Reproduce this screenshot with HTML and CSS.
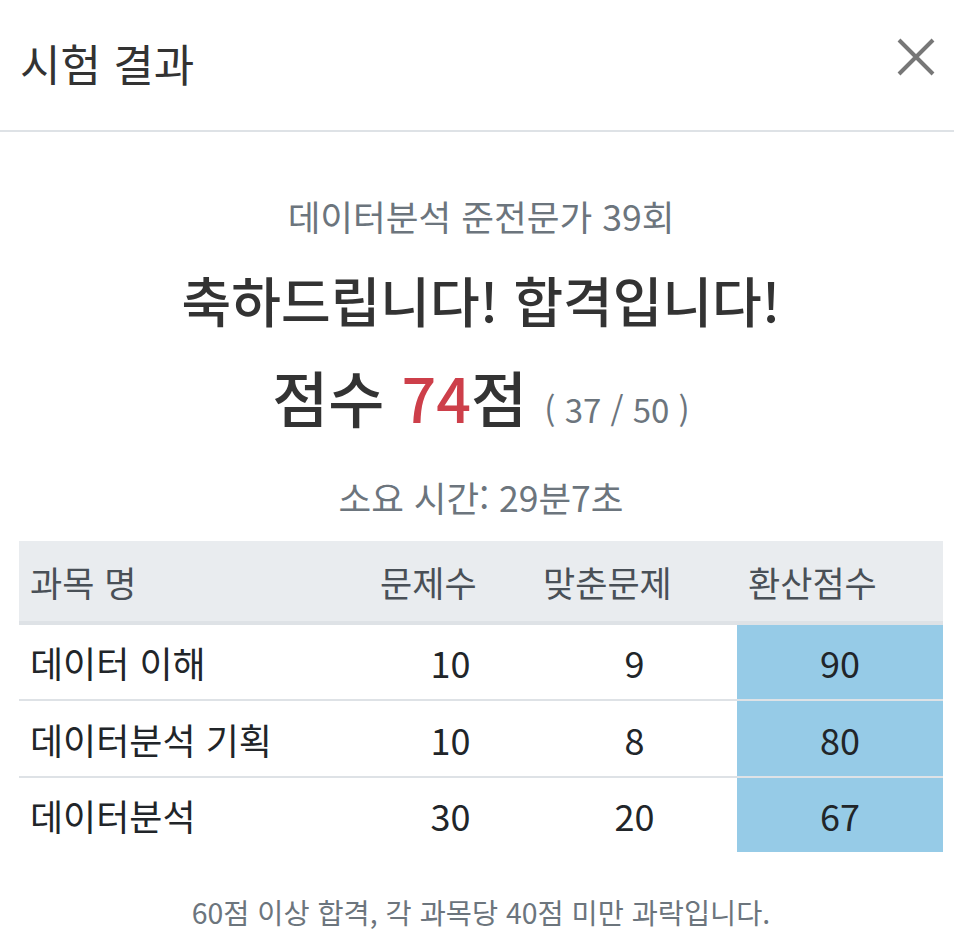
FILE: index.html
```html
<!DOCTYPE html>
<html lang="ko">

<head>
    <meta charset="UTF-8">
    <link rel="stylesheet" href="styles.css">
    <title>시험 결과</title>
</head>

<body>
    <section class="modal">
        <div class="modal-header">
            <h1 class="modal-title">시험 결과</h1>
            <div class="close">
                <svg width="38" height="38" viewBox="0 0 38 38">
                    <path d="M2 2 L36 36 M36 2 L2 36" stroke="#777" stroke-width="4" fill="none" />
                </svg>
            </div>
        </div>
        <div class="modal-body">
            <p class="exam-name">데이터분석 준전문가 39회</p>
            <p class="congrats">축하드립니다! 합격입니다!</p>
            <p class="score">점수 <span class="point">74</span>점 <span class="count">( 37 / 50 )</span></p>
            <p class="time">소요 시간: 29분7초</p>

            <table class="result">
                <thead>
                    <tr>
                        <th class="col-name">과목 명</th>
                        <th class="col-total">문제수</th>
                        <th class="col-right">맞춘문제</th>
                        <th class="col-score">환산점수</th>
                    </tr>
                </thead>
                <tbody>
                    <tr>
                        <td>데이터 이해</td>
                        <td class="num">10</td>
                        <td class="num">9</td>
                        <td class="num conv">90</td>
                    </tr>
                    <tr>
                        <td>데이터분석 기획</td>
                        <td class="num">10</td>
                        <td class="num">8</td>
                        <td class="num conv">80</td>
                    </tr>
                    <tr>
                        <td>데이터분석</td>
                        <td class="num">30</td>
                        <td class="num">20</td>
                        <td class="num conv">67</td>
                    </tr>
                </tbody>
            </table>

            <p class="notice">60점 이상 합격, 각 과목당 40점 미만 과락입니다.</p>
        </div>
    </section>
</body>

</html>
```

FILE: styles.css
```css
* {
    font-family: 'Noto Sans CJK KR', 'Noto Sans', sans-serif;
    box-sizing: border-box;
}

body {
    margin: 0;
    background-color: white;
    color: #212529;
}

.modal-header {
    display: flex;
    justify-content: space-between;
    align-items: center;
    height: 132px;
    padding: 0 19px 0 20px;
    border-bottom: 2px solid #dee2e6;
}

.modal-title {
    margin: 0 0 4px 0;
    font-size: 44px;
    font-weight: 400;
    color: #333;
}

.close {
    display: flex;
    width: 38px;
    height: 38px;
    margin-bottom: 16px;
}

.modal-body {
    width: 943px;
    padding-left: 19px;
    text-align: center;
}

.modal-body p {
    margin: 0;
}

.exam-name {
    padding-top: 60px;
    font-size: 35.6px;
    line-height: 48px;
    color: #6c757d;
}

.congrats {
    padding-top: 24px;
    font-size: 54px;
    line-height: 72px;
    font-weight: 500;
    color: #333;
}

.score {
    padding-top: 21px;
    font-size: 61px;
    line-height: 80px;
    font-weight: 500;
    color: #333;
}

.point {
    color: #cd3f4a;
}

.count {
    font-size: 33px;
    line-height: 1;
    font-weight: 400;
    color: #6c757d;
}

.time {
    padding-top: 36px;
    font-size: 35.5px;
    line-height: 48px;
    color: #6c757d;
}

.result {
    width: 924px;
    margin-top: 20px;
    border-collapse: collapse;
    font-size: 35px;
    text-align: left;
}

.result th {
    height: 82px;
    padding: 0 11px;
    background-color: #e9ecef;
    border-bottom: 4px solid #dee2e6;
    font-weight: 400;
    color: #495057;
}

.result td {
    height: 77px;
    padding: 0 11px;
    border-bottom: 2px solid #dee2e6;
    font-size: 36px;
}

.result tbody tr:last-child td {
    border-bottom: none;
    height: 75px;
}

.col-name {
    width: 350px;
}

.col-total {
    width: 163px;
}

.col-right {
    width: 205px;
}

.col-score {
    width: 206px;
}

.result .num {
    text-align: center;
}

.result .conv {
    background-color: #96cbe7;
}

.notice {
    padding-top: 40px;
    font-size: 28.4px;
    line-height: 40px;
    color: #6c757d;
}
```
